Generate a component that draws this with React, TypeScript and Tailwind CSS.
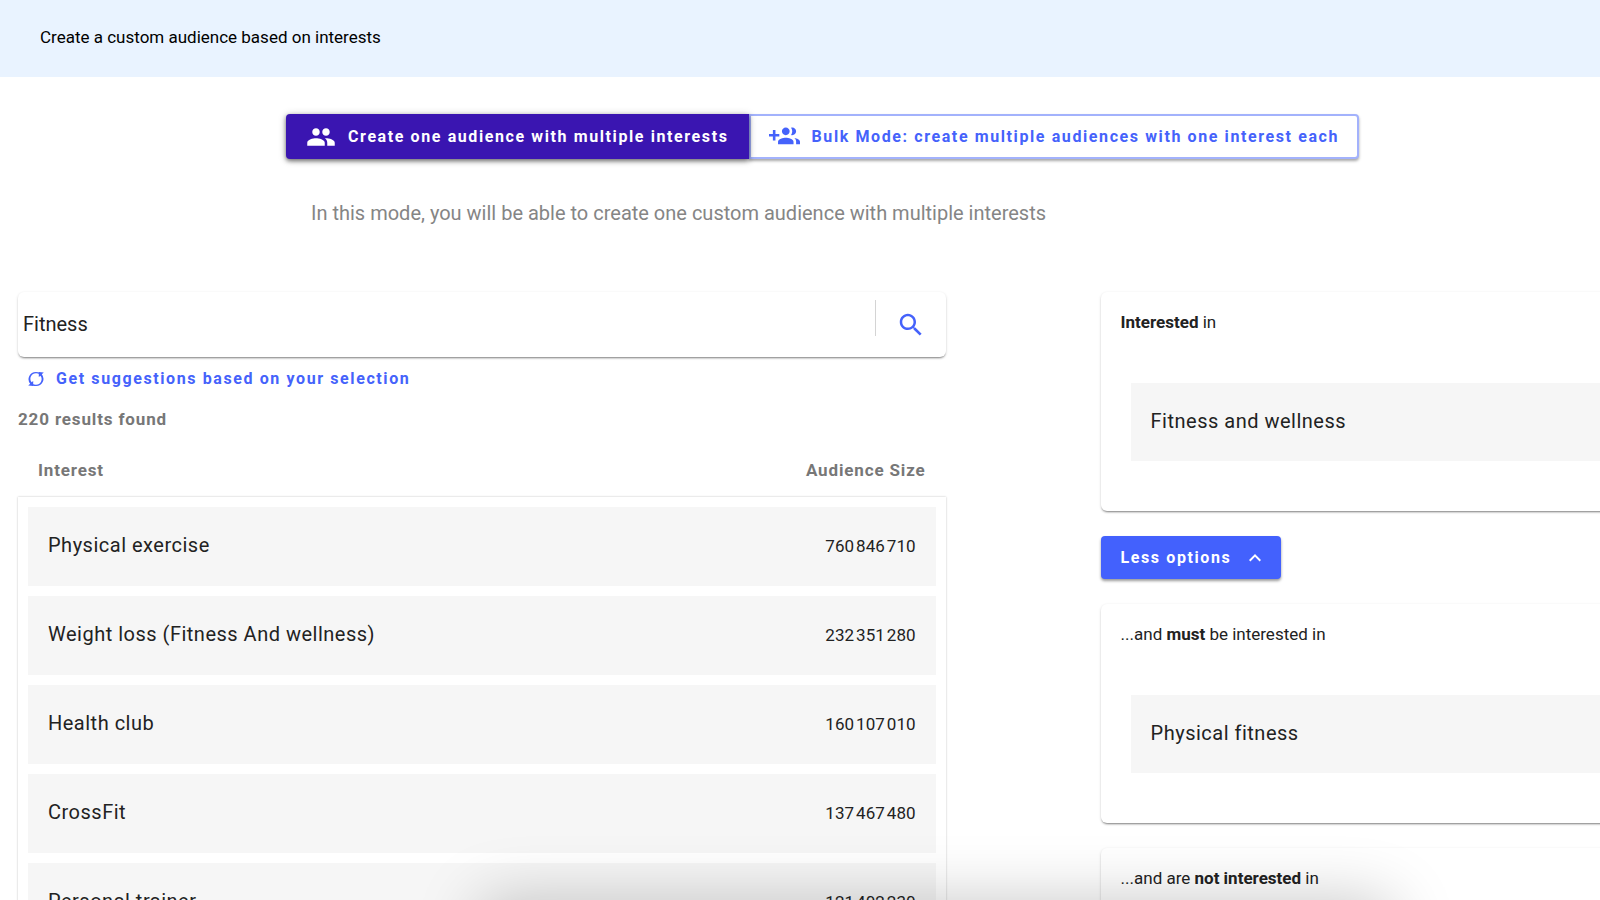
import { useState, type ReactNode } from 'react';

const interests = [
  { name: 'Physical exercise', size: 760846710 },
  { name: 'Weight loss (Fitness And wellness)', size: 232351280 },
  { name: 'Health club', size: 160107010 },
  { name: 'CrossFit', size: 137467480 },
  { name: 'Personal trainer', size: 121402230 },
];

const formatSize = (n: number) => String(n).replace(/\B(?=(\d{3})+$)/g, '\u202f');

const cardShadow = 'shadow-[0_2px_2px_-1px_rgba(0,0,0,0.4),0_1px_3px_rgba(0,0,0,0.16)]';

function Icon({ d, className }: { d: string; className: string }) {
  return (
    <svg viewBox="0 0 24 24" fill="currentColor" aria-hidden="true" className={className}>
      <path d={d} />
    </svg>
  );
}

const groupPath =
  'M16 11c1.66 0 2.99-1.34 2.99-3S17.66 5 16 5c-1.66 0-3 1.34-3 3s1.34 3 3 3zm-8 0c1.66 0 2.99-1.34 2.99-3S9.66 5 8 5C6.34 5 5 6.34 5 8s1.34 3 3 3zm0 2c-2.33 0-7 1.17-7 3.5V19h14v-2.5c0-2.33-4.67-3.5-7-3.5zm8 0c-.29 0-.62.02-.97.05 1.16.84 1.97 1.97 1.97 3.45V19h6v-2.5c0-2.33-4.67-3.5-7-3.5z';
const groupAddPath =
  'M8 10H5V7H3v3H0v2h3v3h2v-3h3v-2zm10 1c1.66 0 2.99-1.34 2.99-3S19.66 5 18 5c-.32 0-.63.05-.91.14.57.81.9 1.79.9 2.86s-.34 2.04-.9 2.86c.28.09.59.14.91.14zm-5 0c1.66 0 2.99-1.34 2.99-3S14.66 5 13 5c-1.66 0-3 1.34-3 3s1.34 3 3 3zm6.62 2.16c.83.73 1.38 1.66 1.38 2.84v2h3v-2c0-1.54-2.37-2.49-4.38-2.84zM13 13c-2 0-6 1-6 3v2h12v-2c0-2-4-3-6-3z';
const searchPath =
  'M15.5 14h-.79l-.28-.27C15.41 12.59 16 11.11 16 9.5 16 5.91 13.09 3 9.5 3S3 5.91 3 9.5 5.91 16 9.5 16c1.61 0 3.09-.59 4.23-1.57l.27.28v.79l5 4.99L20.49 19l-4.99-5zm-6 0C7.01 14 5 11.99 5 9.5S7.01 5 9.5 5 14 7.01 14 9.5 11.99 14 9.5 14z';
const chevronUpPath = 'M12 8l-6 6 1.41 1.41L12 10.83l4.59 4.58L18 14z';

function RefreshIcon() {
  return (
    <svg viewBox="0 0 16 16" fill="currentColor" aria-hidden="true" className="size-4">
      <path d="M2.2 12.8A7.3 7.3 0 0 1 8 .9c1.500 0 2.900.3 4 .9L11.300 3A6.500 6.500 0 0 0 8 2.300 5.500 5.500 0 0 0 3.600 11.200l1.600-1.300v5.200l-5-.6z" />
      <path d="M13.8 3.200A7.300 7.300 0 0 1 8 15.100c-1.500 0-2.900-.3-4-.9L4.700 13A6.500 6.500 0 0 0 8 13.700 5.500 5.500 0 0 0 12.400 4.800L10.800 6.100V.9l5 .6z" />
    </svg>
  );
}

function AudienceCard({ title, item }: { title: ReactNode; item?: string }) {
  return (
    <section className={`rounded-l-md bg-white pt-4 pl-5 pb-[50px] ${cardShadow}`}>
      <h2 className="text-[17px] leading-7">{title}</h2>
      <div className="mt-[47px] ml-[10px] flex h-[78px] items-center bg-[#f6f6f6] px-5 pb-0.5 text-xl tracking-wide">
        {item}
      </div>
    </section>
  );
}

export default function App() {
  const [query, setQuery] = useState('Fitness');
  const [open, setOpen] = useState(true);

  return (
    <div className="relative h-screen overflow-hidden bg-white font-[Roboto,sans-serif] text-[#222]">
      <header className="flex h-[77px] items-center bg-[#e9f3ff] px-10 pb-0.5 text-black">
        <h1 className="text-[17px]">Create a custom audience based on interests</h1>
      </header>

      <div className="mt-[37px] ml-[286px]">
        <div className="flex h-[45px] w-max text-base font-bold tracking-widest">
          <button
            type="button"
            aria-pressed="true"
            className="z-10 flex items-center gap-3 rounded-l bg-[#3a15b1] px-5 text-white shadow-[0_2px_4px_rgba(0,0,0,0.5),0_1px_8px_rgba(0,0,0,0.2)]"
          >
            <Icon d={groupPath} className="size-[30px]" />
            Create one audience with multiple interests
          </button>
          <button
            type="button"
            aria-pressed="false"
            className="flex items-center gap-3 rounded-r border-2 border-[#a3b2fc] bg-white px-[18px] text-[#4562fb] shadow-[0_2px_3px_rgba(0,0,0,0.35)]"
          >
            <Icon d={groupAddPath} className="size-[31px]" />
            Bulk Mode: create multiple audiences with one interest each
          </button>
        </div>
        <p className="mt-10 pl-[25px] text-xl leading-7 text-[#858585]">
          In this mode, you will be able to create one custom audience with multiple interests
        </p>
      </div>

      <main className="mt-[65px] grid grid-cols-[65fr_35fr] gap-x-[155px] pl-[18px]">
        <div>
          <div className={`flex h-[65px] rounded-md bg-white ${cardShadow}`}>
            <input
              aria-label="Search interests"
              value={query}
              onChange={(e) => setQuery(e.target.value)}
              className="min-w-0 flex-1 rounded-md px-[5px] pb-0.5 text-xl outline-none"
            />
            <span className="mt-2 h-9 w-px bg-[#d4d4d4]" />
            <button type="button" aria-label="Search" className="flex w-[70px] items-center justify-center text-[#4562fb]">
              <Icon d={searchPath} className="size-[30px]" />
            </button>
          </div>
          <button
            type="button"
            className="mt-2 ml-[10px] flex h-7 items-center gap-3 text-base font-bold tracking-widest text-[#4562fb]"
          >
            <RefreshIcon />
            Get suggestions based on your selection
          </button>
          <p className="mt-3 text-[17px] leading-7 font-bold tracking-wider text-[#777]">220 results found</p>

          <table className="mt-[23px] flex flex-col">
            <thead className="block">
              <tr className="flex justify-between px-5 text-[17px] leading-7 text-[#777]">
                <th className="tracking-wider">Interest</th>
                <th className="tracking-wider">Audience Size</th>
              </tr>
            </thead>
            <tbody className="mt-[13px] flex flex-col gap-[10px] p-[10px] shadow-[0_0_2px_rgba(0,0,0,0.25)]">
              {interests.map((row) => (
                <tr key={row.name} className="flex h-[79px] items-center justify-between bg-[#f6f6f6] px-5">
                  <td className="pb-1 text-xl tracking-wide">{row.name}</td>
                  <td className="text-[17px]">{formatSize(row.size)}</td>
                </tr>
              ))}
            </tbody>
          </table>
        </div>

        <div className="-mr-6 flex flex-col items-stretch gap-[25px]">
          <AudienceCard
            title={
              <>
                <b>Interested</b> in
              </>
            }
            item="Fitness and wellness"
          />
          <button
            type="button"
            aria-expanded={open}
            onClick={() => setOpen(!open)}
            className="flex h-[43px] items-center gap-3 self-start rounded bg-[#4361fd] pr-[14px] pl-5 text-base font-bold tracking-widest text-white shadow-[0_2px_3px_rgba(0,0,0,0.4)]"
          >
            Less options
            <Icon d={chevronUpPath} className="size-6" />
          </button>
          {open && (
            <>
              <AudienceCard
                title={
                  <>
                    ...and <b>must</b> be interested in
                  </>
                }
                item="Physical fitness"
              />
              <AudienceCard
                title={
                  <>
                    ...and are <b>not interested</b> in
                  </>
                }
              />
            </>
          )}
        </div>
      </main>

      <div className="pointer-events-none absolute top-full right-[13%] left-[30%] h-24 rounded-xl shadow-[0_0_64px_rgba(0,0,0,0.22)]" />
    </div>
  );
}
